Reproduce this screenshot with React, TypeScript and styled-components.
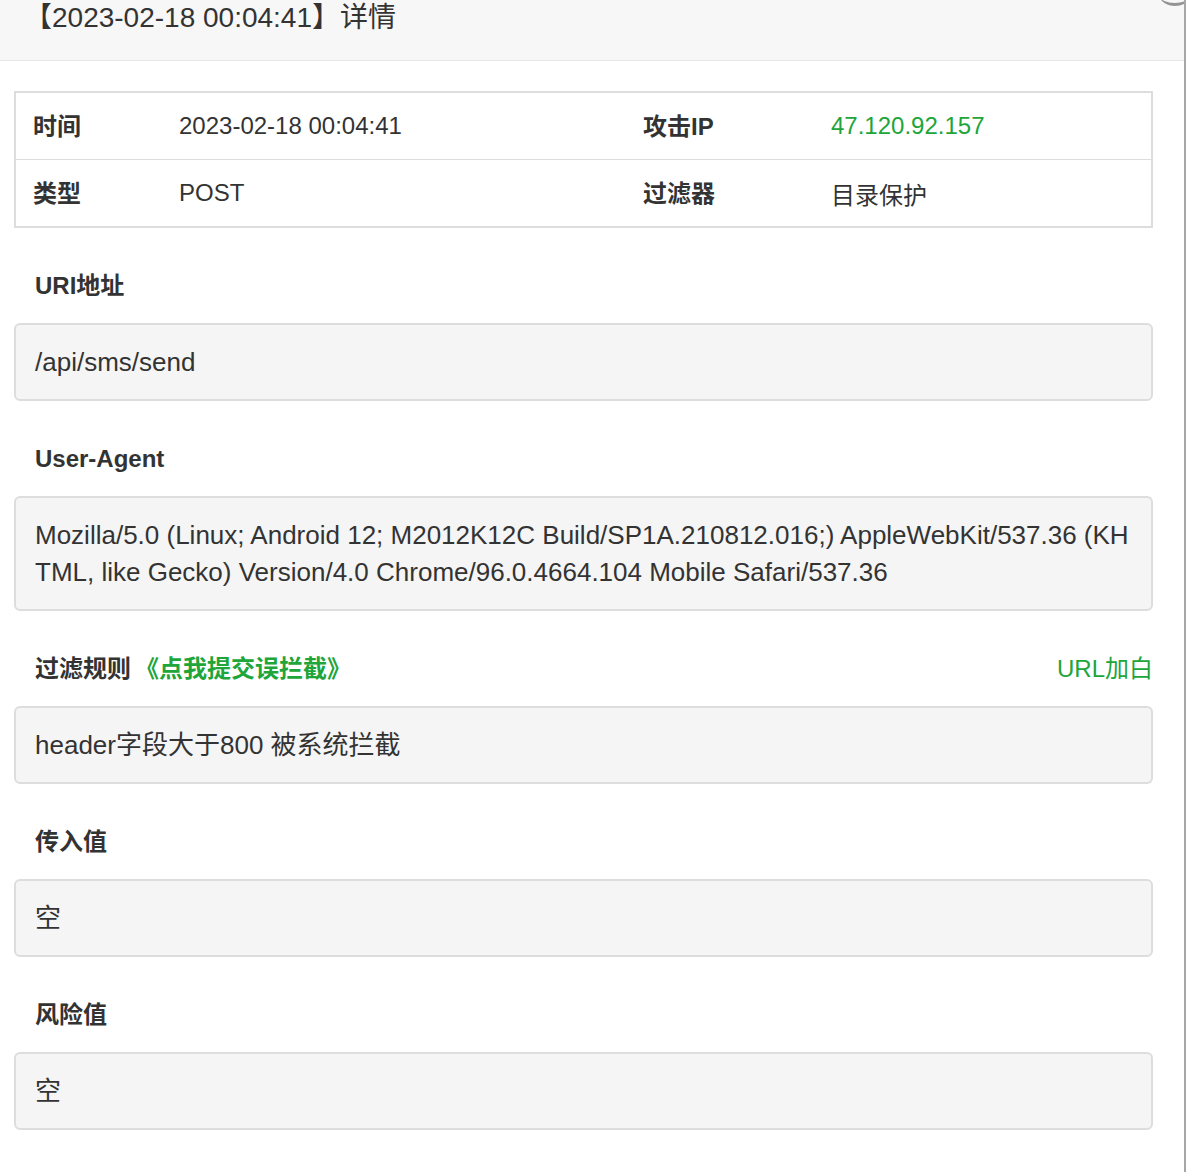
import React from "react";
import styled, { createGlobalStyle } from "styled-components";

const GREEN = "#20a53a";

const Global = createGlobalStyle`
  html, body {
    margin: 0;
    padding: 0;
    background: #ffffff;
  }
  body {
    font-family: "Liberation Sans", Arial, "Noto Sans CJK SC", sans-serif;
    color: #333333;
  }
  * { box-sizing: border-box; }
`;

const Page = styled.div`
  width: 1186px;
  min-height: 1172px;
  border-right: 2px solid #a6a6a6;
  background: #ffffff;
  position: relative;
  overflow: hidden;
`;

const Corner = styled.div`
  position: absolute;
  top: -14px;
  right: -6px;
  width: 30px;
  height: 20px;
  border-radius: 50%;
  border-bottom: 3px solid #6b6b6b;
  opacity: 0.7;
`;

const Header = styled.header`
  height: 61px;
  background: #f7f7f7;
  border-bottom: 1px solid #e6e6e6;
  padding: 0 0 0 24px;
  display: flex;
  align-items: flex-start;
`;

const Title = styled.h1`
  margin: 0;
  font-size: 28px;
  line-height: 36px;
  font-weight: normal;
  color: #333333;
`;

const Content = styled.main`
  padding: 30px 31px 40px 14px;
  display: flex;
  flex-direction: column;
`;

const InfoTable = styled.div`
  border: 2px solid #dddddd;
  display: grid;
  grid-template-columns: 146px 464px 188px 1fr;
`;

const Cell = styled.div<{ $bold?: boolean; $green?: boolean; $last?: boolean }>`
  height: ${(p) => (p.$last ? "66px" : "67px")};
  border-bottom: ${(p) => (p.$last ? "none" : "1px solid #dddddd")};
  padding: 0 0 ${(p) => (p.$bold ? "3px" : "0")} 17px;
  display: flex;
  align-items: center;
  font-size: 24px;
  font-weight: ${(p) => (p.$bold ? "bold" : "normal")};
  color: ${(p) => (p.$green ? GREEN : "#333333")};
  white-space: nowrap;
`;

const SectionHead = styled.div`
  margin: 40px 0 19px 0;
  padding: 0 0 0 21px;
  height: 36px;
  display: flex;
  align-items: center;
  justify-content: space-between;
  font-size: 24px;
  line-height: 36px;
`;

const SectionLabel = styled.span`
  font-weight: bold;
  color: #333333;
`;

const ReportLink = styled.a`
  margin-left: 4px;
  font-weight: bold;
  color: ${GREEN};
  text-decoration: none;
  cursor: pointer;
`;

const WhiteLink = styled.a`
  color: ${GREEN};
  font-weight: normal;
  text-decoration: none;
  cursor: pointer;
`;

const ValueBox = styled.div`
  background: #f5f5f5;
  border: 2px solid #dddddd;
  border-radius: 6px;
  padding: 18.5px 19px;
  font-size: 26px;
  line-height: 37px;
  color: #333333;
  word-break: break-all;
`;

type Section = {
  label: string;
  value: string;
  extra?: boolean;
};

const sections: Section[] = [
  { label: "URI地址", value: "/api/sms/send" },
  {
    label: "User-Agent",
    value:
      "Mozilla/5.0 (Linux; Android 12; M2012K12C Build/SP1A.210812.016;) AppleWebKit/537.36 (KHTML, like Gecko) Version/4.0 Chrome/96.0.4664.104 Mobile Safari/537.36",
  },
  { label: "过滤规则", value: "header字段大于800 被系统拦截", extra: true },
  { label: "传入值", value: "空" },
  { label: "风险值", value: "空" },
];

export default function App() {
  return (
    <>
      <Global />
      <Page>
        <Corner />
        <Header>
          <Title>【2023-02-18 00:04:41】详情</Title>
        </Header>
        <Content>
          <InfoTable>
            <Cell $bold>时间</Cell>
            <Cell>2023-02-18 00:04:41</Cell>
            <Cell $bold>攻击IP</Cell>
            <Cell $green>47.120.92.157</Cell>
            <Cell $bold $last>类型</Cell>
            <Cell $last>POST</Cell>
            <Cell $bold $last>过滤器</Cell>
            <Cell $last>目录保护</Cell>
          </InfoTable>
          {sections.map((s) => (
            <React.Fragment key={s.label}>
              <SectionHead>
                <span>
                  <SectionLabel>{s.label}</SectionLabel>
                  {s.extra && <ReportLink>《点我提交误拦截》</ReportLink>}
                </span>
                {s.extra && <WhiteLink>URL加白</WhiteLink>}
              </SectionHead>
              <ValueBox>{s.value}</ValueBox>
            </React.Fragment>
          ))}
        </Content>
      </Page>
    </>
  );
}
